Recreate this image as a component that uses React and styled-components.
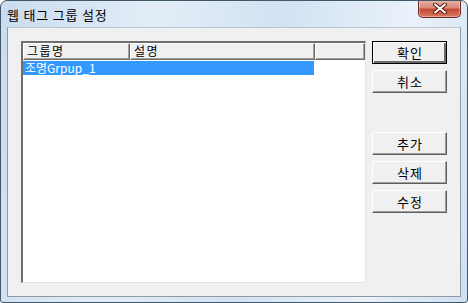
import React, { useState } from 'react';
import styled, { createGlobalStyle, css } from 'styled-components';

const GlobalStyle = createGlobalStyle`
  html, body {
    margin: 0;
    padding: 0;
    background: #ffffff;
  }
  body {
    font-family: 'Noto Sans CJK KR', 'Noto Sans', sans-serif;
    font-size: 12px;
  }
`;

const Window = styled.div`
  width: 468px;
  height: 303px;
  box-sizing: border-box;
  display: flex;
  flex-direction: column;
  border: 1px solid #41586a;
  border-radius: 7px 7px 3px 3px;
  background: linear-gradient(100deg, #c9dcef 0%, #e3edf7 30%, #d2e2f2 55%, #eaf2fa 80%, #cfe0f1 100%);
  overflow: hidden;
`;

const TitleBar = styled.div`
  height: 26px;
  flex: none;
  display: flex;
  align-items: flex-start;
  justify-content: space-between;
  padding-left: 6px;
  padding-right: 6px;
`;

const Title = styled.div`
  margin-top: 6px;
  font-size: 13px;
  line-height: 15px;
  color: #000;
  letter-spacing: 0.8px;
`;

const CloseButton = styled.div`
  width: 43px;
  height: 18px;
  margin-top: -1px;
  box-sizing: border-box;
  display: flex;
  align-items: center;
  justify-content: center;
  border: 1px solid #6d2a22;
  border-top: none;
  border-radius: 0 0 5px 5px;
  background: linear-gradient(180deg, #e9b3a6 0%, #d88a78 45%, #c24b35 55%, #d97a62 100%);
  box-shadow: inset 0 0 0 1px rgba(255, 255, 255, 0.35);
`;

const Client = styled.div`
  flex: 1;
  margin: 0 6px 6px 6px;
  display: flex;
  gap: 6px;
  padding: 13px;
  background: #f0f0f0;
  border: 1px solid #8c9aa5;
  border-top-color: #b7c6d3;
`;

const ListView = styled.div`
  width: 346px;
  height: 242px;
  box-sizing: border-box;
  background: #ffffff;
  border-style: solid;
  border-width: 2px 1px 1px 2px;
  border-color: #6f6f6f #e3e3e3 #e3e3e3 #6f6f6f;
  display: flex;
  flex-direction: column;
`;

const HeaderRow = styled.div`
  display: flex;
  height: 17px;
  flex: none;
`;

const HeaderCell = styled.div`
  box-sizing: border-box;
  width: ${({ $w }) => ($w ? `${$w}px` : 'auto')};
  flex: ${({ $w }) => ($w ? 'none' : '1')};
  height: 17px;
  padding-left: 3px;
  font-size: 12px;
  line-height: 14px;
  letter-spacing: 1.5px;
  color: #000;
  background: #f0f0f0;
  border-style: solid;
  border-width: 1px;
  border-color: #ffffff #6a6a6a #6a6a6a #ffffff;
  box-shadow: inset -1px -1px 0 #a0a0a0;
  overflow: hidden;
`;

const Rows = styled.div`
  padding-top: 1px;
  display: flex;
  flex-direction: column;
`;

const Row = styled.div`
  display: flex;
  height: 14px;
  width: 291px;
  font-size: 12px;
  line-height: 14px;
  cursor: default;
  ${({ $selected }) =>
    $selected
      ? css`
          background: #3399ff;
          color: #ffffff;
        `
      : css`
          color: #000;
        `}
`;

const Cell = styled.div`
  width: ${({ $w }) => $w}px;
  padding-left: 2px;
  white-space: nowrap;
`;

const ButtonColumn = styled.div`
  display: flex;
  flex-direction: column;
  gap: 6px;
`;

const Spacer = styled.div`
  height: ${({ $h }) => $h}px;
`;

const Button = styled.button`
  width: 75px;
  height: 23px;
  box-sizing: border-box;
  padding: 0 0 1px 1px;
  font-family: 'Noto Sans CJK KR', 'Noto Sans', sans-serif;
  font-size: 13px;
  letter-spacing: 1px;
  color: #000;
  background: #f0f0f0;
  border-style: solid;
  border-width: 1px;
  border-color: #ffffff #5e5e5e #5e5e5e #ffffff;
  box-shadow: inset -1px -1px 0 #a0a0a0;
  ${({ $default }) =>
    $default &&
    css`
      border-color: #000;
      box-shadow: inset 1px 1px 0 #ffffff, inset -2px -2px 0 #6a6a6a;
    `}
`;

const groups = [{ name: '조명Grpup_1', desc: '' }];

export default function App() {
  const [selected, setSelected] = useState(0);

  return (
    <>
      <GlobalStyle />
      <Window>
        <TitleBar>
          <Title>웹 태그 그룹 설정</Title>
          <CloseButton>
            <svg width="14" height="11" viewBox="0 0 14 11">
              <path
                d="M2 1.5 L12 9.5 M12 1.5 L2 9.5"
                stroke="#5a1c14"
                strokeWidth="4"
                strokeLinecap="round"
              />
              <path
                d="M2 1.5 L12 9.5 M12 1.5 L2 9.5"
                stroke="#ffffff"
                strokeWidth="2"
                strokeLinecap="round"
              />
            </svg>
          </CloseButton>
        </TitleBar>
        <Client>
          <ListView>
            <HeaderRow>
              <HeaderCell $w={107}>그룹명</HeaderCell>
              <HeaderCell $w={185}>설명</HeaderCell>
              <HeaderCell />
            </HeaderRow>
            <Rows>
              {groups.map((g, i) => (
                <Row key={g.name} $selected={selected === i} onClick={() => setSelected(i)}>
                  <Cell $w={106}>{g.name}</Cell>
                  <Cell $w={185}>{g.desc}</Cell>
                </Row>
              ))}
            </Rows>
          </ListView>
          <ButtonColumn>
            <Button $default>확인</Button>
            <Button>취소</Button>
            <Spacer $h={27} />
            <Button>추가</Button>
            <Button>삭제</Button>
            <Button>수정</Button>
          </ButtonColumn>
        </Client>
      </Window>
    </>
  );
}
